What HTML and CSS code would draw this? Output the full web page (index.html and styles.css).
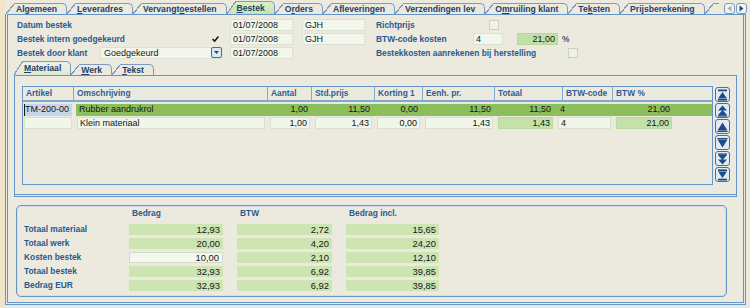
FILE: index.html
```html
<!DOCTYPE html>
<html>
<head>
<meta charset="utf-8">
<link rel="stylesheet" href="styles.css">
</head>
<body>
<div class="app">
  <div class="tabstrip">
    <div class="tab">Algemeen</div>
    <div class="tab"><u>L</u>everadres</div>
    <div class="tab">Vervangt<u>o</u>estellen</div>
    <div class="tab active"><u>B</u>estek</div>
    <div class="tab">O<u>r</u>ders</div>
    <div class="tab">Afleveringen</div>
    <div class="tab">Verzendingen lev</div>
    <div class="tab">O<u>m</u>ruiling klant</div>
    <div class="tab">Te<u>k</u>sten</div>
    <div class="tab">Prijsberekening</div>
    <div class="tab stub"></div>
    <div class="tabscroll">
      <span class="tsb"><svg width="5" height="7" viewBox="0 0 5 7"><path d="M4.5 0.5 L0.5 3.5 L4.5 6.5Z" fill="#9db1c9"/></svg></span>
      <span class="tsb"><svg width="5" height="7" viewBox="0 0 5 7"><path d="M0.5 0.5 L4.5 3.5 L0.5 6.5Z" fill="#1d4a82"/></svg></span>
    </div>
  </div>

  <div class="frame">
    <div class="form">
      <div class="frow">
        <div class="lbl lcol">Datum bestek</div>
        <div class="inp date">01/07/2008</div>
        <div class="inp user">GJH</div>
        <div class="lbl rlabel rl-richt">Richtprijs</div>
        <span class="chk"></span>
      </div>
      <div class="frow">
        <div class="lbl lcol checked">Bestek intern goedgekeurd
          <svg class="tick" width="7" height="6" viewBox="0 0 7 6"><path d="M0.6 3 L2.6 5.2 L6.4 0.6" fill="none" stroke="#111" stroke-width="1.5"/></svg>
        </div>
        <div class="inp date">01/07/2008</div>
        <div class="inp user">GJH</div>
        <div class="lbl rlabel rl-btw">BTW-code kosten</div>
        <div class="inp code">4</div>
        <div class="inp pct">21,00</div>
        <span class="lbl pctsign">%</span>
      </div>
      <div class="frow">
        <div class="lbl lshort">Bestek door klant</div>
        <div class="inp select">Goedgekeurd
          <span class="dd"><svg width="5" height="3" viewBox="0 0 5 3"><path d="M0 0 H5 L2.5 3Z" fill="#1d4a82"/></svg></span>
        </div>
        <div class="inp date after-select">01/07/2008</div>
        <div class="lbl rlabel far rl-kost">Bestekkosten aanrekenen bij herstelling</div>
        <span class="chk"></span>
      </div>
    </div>

    <div class="subtabs">
      <div class="tab active sub"><u>M</u>ateriaal</div>
      <div class="tab"><u>W</u>erk</div>
      <div class="tab"><u>T</u>ekst</div>
    </div>

    <div class="subpanel">
      <div class="gridwrap">
        <div class="grid">
          <div class="ghead">
            <div>Artikel</div>
            <div>Omschrijving</div>
            <div>Aantal</div>
            <div>Std.prijs</div>
            <div>Korting 1</div>
            <div>Eenh. pr.</div>
            <div>Totaal</div>
            <div>BTW-code</div>
            <div>BTW %</div>
          </div>
          <div class="grow selrow">
            <div class="c cur">TM-200-00</div>
            <div class="c">Rubber aandrukrol</div>
            <div class="c r">1,00</div>
            <div class="c r">11,50</div>
            <div class="c r">0,00</div>
            <div class="c r">11,50</div>
            <div class="c r">11,50</div>
            <div class="c">4</div>
            <div class="c r">21,00</div>
          </div>
          <div class="grow">
            <div class="c in"></div>
            <div class="c in">Klein materiaal</div>
            <div class="c in r">1,00</div>
            <div class="c in r">1,43</div>
            <div class="c in r">0,00</div>
            <div class="c in r">1,43</div>
            <div class="c g r">1,43</div>
            <div class="c in">4</div>
            <div class="c g r">21,00</div>
          </div>
        </div>
        <div class="nav">
          <span class="nb"><svg width="11" height="12" viewBox="0 0 11 12"><rect x="1" y="0.5" width="9" height="1.8"/><path d="M5.5 3 L10 9.5 H1Z"/><rect x="1" y="10" width="9" height="1.6"/></svg></span>
          <span class="nb"><svg width="11" height="12" viewBox="0 0 11 12"><path d="M5.5 0.5 L10 5.5 H1Z M5.5 5 L10 10 H1Z"/><rect x="1" y="10.2" width="9" height="1.4"/></svg></span>
          <span class="nb"><svg width="11" height="12" viewBox="0 0 11 12"><path d="M5.5 1.5 L10.5 9.5 H0.5Z"/><rect x="0.5" y="9.8" width="10" height="1.2"/></svg></span>
          <span class="nb"><svg width="11" height="12" viewBox="0 0 11 12"><rect x="0.5" y="1" width="10" height="1.2"/><path d="M0.5 2.5 H10.5 L5.5 10.5Z"/></svg></span>
          <span class="nb"><svg width="11" height="12" viewBox="0 0 11 12"><rect x="1" y="0.4" width="9" height="1.4"/><path d="M1 2 H10 L5.5 7Z M1 6.5 H10 L5.5 11.5Z"/></svg></span>
          <span class="nb"><svg width="11" height="12" viewBox="0 0 11 12"><rect x="1" y="0.4" width="9" height="1.6"/><path d="M1 2.5 H10 L5.5 9Z"/><rect x="1" y="9.7" width="9" height="1.8"/></svg></span>
        </div>
      </div>
    </div>

    <div class="summary">
      <div></div>
      <div class="lbl sh">Bedrag</div>
      <div class="lbl sh">BTW</div>
      <div class="lbl sh">Bedrag incl.</div>

      <div class="lbl sl">Totaal materiaal</div>
      <div class="sv">12,93</div><div class="sv">2,72</div><div class="sv">15,65</div>

      <div class="lbl sl">Totaal werk</div>
      <div class="sv">20,00</div><div class="sv">4,20</div><div class="sv">24,20</div>

      <div class="lbl sl">Kosten bestek</div>
      <div class="sv edit">10,00</div><div class="sv">2,10</div><div class="sv">12,10</div>

      <div class="lbl sl">Totaal bestek</div>
      <div class="sv">32,93</div><div class="sv">6,92</div><div class="sv">39,85</div>

      <div class="lbl sl">Bedrag EUR</div>
      <div class="sv">32,93</div><div class="sv">6,92</div><div class="sv">39,85</div>
    </div>
  </div>
</div>
</body>
</html>
```

FILE: styles.css
```css
* { box-sizing: border-box; }
html, body { margin: 0; padding: 0; }
body {
  width: 750px;
  height: 308px;
  overflow: hidden;
  background: #ece9df;
  font-family: "Liberation Sans", Arial, sans-serif;
  font-size: 9px;
  color: #161616;
}
.app {
  height: 308px;
  padding-left: 5px;
  background: linear-gradient(to right, #f0e5ca 0, #f0e5ca 5px, #ece9df 5px);
}

/* ---------- tabs ---------- */
.tabstrip {
  display: flex;
  align-items: flex-end;
  height: 14px;
  padding-left: 1px;
}
.tab {
  position: relative;
  margin-left: 9px;
  height: 11px;
  padding: 0 9px 0 1px;
  border-top: 1px solid #7b9bc2;
  border-right: 1px solid #7b9bc2;
  border-top-right-radius: 5px;
  font-weight: bold;
  font-size: 8.6px;
  line-height: 10px;
  color: #223f6a;
  white-space: nowrap;
}
.tab u { text-decoration-thickness: 1px; text-underline-offset: 1px; }
.tab::before {
  content: "";
  position: absolute;
  left: -9px;
  top: -1px;
  bottom: 0;
  width: 9px;
  background: linear-gradient(to bottom right, transparent calc(50% - 0.7px), #7b9bc2 calc(50% - 0.7px), #7b9bc2 calc(50% + 0.5px), transparent calc(50% + 0.5px));
}
.tab.active {
  height: 13px;
  line-height: 12px;
  background: linear-gradient(#dcefc9, #c7e3aa);
}
.tab.active::before {
  background: linear-gradient(to bottom right, transparent calc(50% - 0.7px), #7b9bc2 calc(50% - 0.7px), #7b9bc2 calc(50% + 0.5px), #cfe8b6 calc(50% + 0.5px));
}
.tab.stub {
  width: 5px;
  padding: 0;
  border-right: none;
  border-top-right-radius: 0;
}
.tabscroll {
  margin-left: auto;
  align-self: center;
  display: flex;
  gap: 1px;
  padding: 2px 3px 0 0;
}
.tsb {
  width: 11px;
  height: 11px;
  border: 1px solid #7b9bc2;
  border-radius: 3px;
  background: #f1f2ec;
  display: flex;
  align-items: center;
  justify-content: center;
}

/* ---------- frame ---------- */
.frame {
  width: 741px;
  height: 291px;
  border: 3px double #6595c6;
  border-top: 1px solid #6595c6;
  padding-top: 3px;
}

/* ---------- form ---------- */
.frow {
  display: flex;
  align-items: center;
  height: 14px;
  padding-left: 9px;
}
.lbl {
  font-weight: bold;
  font-size: 8.4px;
  color: #2b5a8c;
  white-space: nowrap;
}
.lcol { width: 213px; }
.lcol.checked {
  display: flex;
  align-items: center;
  justify-content: space-between;
  padding-right: 11px;
}
.lshort { width: 83px; }
.inp {
  height: 12px;
  border: 1px solid #dbe2d1;
  background: #f2f6ec;
  padding: 0 2px;
  font-size: 9px;
  line-height: 10px;
  white-space: nowrap;
  color: #161616;
}
.date { width: 63px; }
.user { width: 63px; margin-left: 9px; }
.after-select { margin-left: 7px; }
.rlabel { margin-left: 11px; }
.rlabel.far { margin-left: 83px; }
.rl-richt { width: 113px; }
.rl-btw { width: 97px; }
.rl-kost { width: 192px; }
.code { width: 30px; }
.pct {
  width: 41px;
  margin-left: 14px;
  text-align: right;
  background: #c2e0a6;
  border-color: #b8d89c;
}
.pctsign { margin-left: 4px; }
.chk {
  width: 10px;
  height: 10px;
  border: 1px solid #cbd2c1;
  background: #eef3e6;
}
.select {
  width: 123px;
  display: flex;
  align-items: center;
  justify-content: space-between;
  padding-right: 0;
  padding-left: 3px;
}
.dd {
  width: 11px;
  height: 11px;
  margin-top: -1px;
  border: 1px solid #3f70a8;
  border-radius: 2px;
  background: #dde8f3;
  display: flex;
  align-items: center;
  justify-content: center;
}

/* ---------- sub tabs / panel ---------- */
.subtabs {
  display: flex;
  align-items: flex-end;
  height: 14px;
  margin-top: 1px;
  padding-left: 6px;
}
.tab.sub {
  height: 14px;
  line-height: 13px;
  background: linear-gradient(#eef2e3, #dfe7cf);
}
.tab.sub::before {
  background: linear-gradient(to bottom right, transparent calc(50% - 0.7px), #7b9bc2 calc(50% - 0.7px), #7b9bc2 calc(50% + 0.5px), #e7ecda calc(50% + 0.5px));
}
.subpanel {
  margin-left: 6px;
  width: 723px;
  height: 122px;
  border: 1px solid #6595c6;
  border-bottom: 3px double #6595c6;
  padding: 10px 6px 0 7px;
}
.gridwrap {
  display: flex;
  gap: 2px;
}
.grid {
  width: 691px;
  height: 99px;
  border: 1px solid #6595c6;
}
.ghead {
  display: grid;
  grid-template-columns: 51px 194px 44px 63px 48px 72px 68px 50px 1fr;
  height: 15px;
  border-bottom: 2px solid #7fa9d2;
}
.ghead div {
  border-right: 1px solid #7fa9d2;
  padding-left: 3px;
  font-weight: bold;
  font-size: 8.4px;
  line-height: 13px;
  color: #2f5f90;
  white-space: nowrap;
}
.ghead div:last-child { border-right: none; }
.grow {
  display: grid;
  grid-template-columns: 48px 188px 40px 57px 43px 68px 55px 53px 56px;
  column-gap: 5px;
  height: 12px;
  margin-top: 1px;
  padding-left: 1px;
}
.grow.selrow {
  margin-top: 2px;
  background: linear-gradient(to right, transparent 53px, #8cbf5c 53px);
}
.c {
  height: 12px;
  padding: 0 2px;
  font-size: 9px;
  line-height: 11px;
  white-space: nowrap;
  overflow: hidden;
  color: #141414;
}
.c.r { text-align: right; }
.c.in {
  background: #f1f6ea;
  border: 1px solid #d9e0cf;
  line-height: 10px;
}
.c.g {
  background: #c5e1aa;
  border: 1px solid #bad79d;
  line-height: 10px;
}
.c.cur {
  background: #c8d5e8;
  border-left: 1px solid #1a1a1a;
  padding-left: 0;
}
.nav {
  display: flex;
  flex-direction: column;
  gap: 1px;
  padding-top: 1px;
}
.nb {
  width: 15px;
  height: 15px;
  border: 1px solid #3d70aa;
  border-radius: 3px;
  background: #e3eaf1;
  display: flex;
  align-items: center;
  justify-content: center;
  fill: #1b4c86;
}

/* ---------- summary ---------- */
.summary {
  margin: 8px 0 0 8px;
  width: 711px;
  height: 92px;
  border: 1px solid #6595c6;
  border-radius: 5px;
  box-shadow: inset 0 0 0 1px #cfdfee;
  padding-left: 7px;
  display: grid;
  grid-template-columns: 91px 94px 95px 93px;
  grid-template-rows: 15px repeat(5, 11px);
  column-gap: 14px;
  row-gap: 3px;
  align-content: start;
}
.sh {
  padding-left: 3px;
  line-height: 15px;
}
.sl { line-height: 11px; }
.sv {
  background: #cce5b3;
  text-align: right;
  padding-right: 3px;
  font-size: 9.4px;
  line-height: 11px;
  color: #161616;
}
.sv.edit {
  background: #f3f7ee;
  border: 1px solid #d3dbc6;
  line-height: 9px;
}
```
